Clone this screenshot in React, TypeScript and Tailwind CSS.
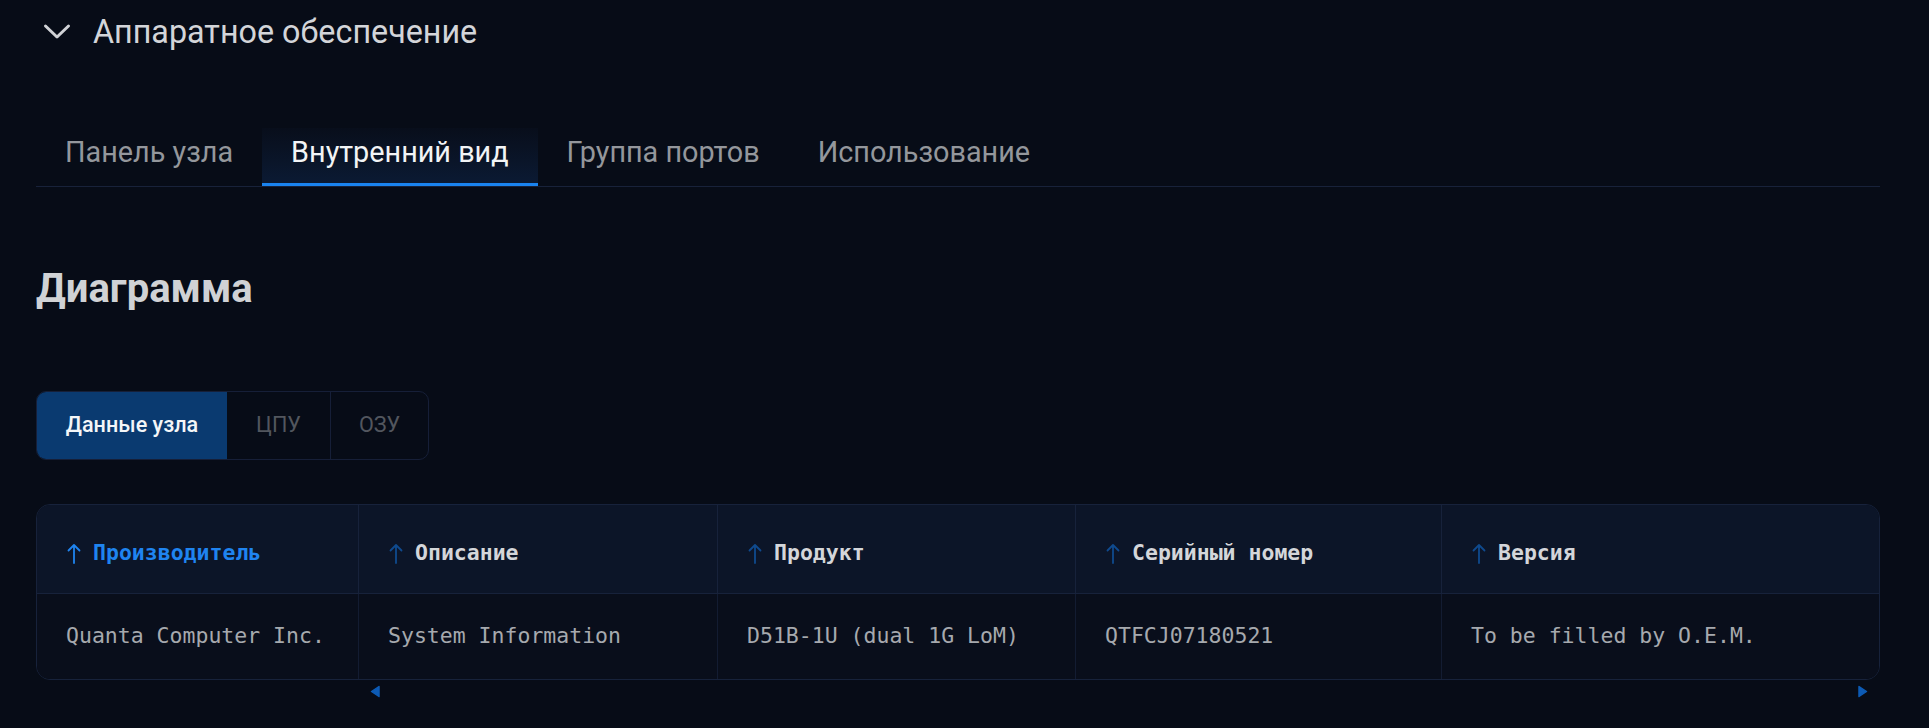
import React from 'react'

type Column = {
  key: string
  label: string
  value: string
  width: string
}

const tabs = ['Панель узла', 'Внутренний вид', 'Группа портов', 'Использование']

const columns: Column[] = [
  { key: 'vendor', label: 'Производитель', value: 'Quanta Computer Inc.', width: 'w-[322px]' },
  { key: 'desc', label: 'Описание', value: 'System Information', width: 'w-[359px]' },
  { key: 'product', label: 'Продукт', value: 'D51B-1U (dual 1G LoM)', width: 'w-[358px]' },
  { key: 'serial', label: 'Серийный номер', value: 'QTFCJ07180521', width: 'w-[366px]' },
  { key: 'version', label: 'Версия', value: 'To be filled by O.E.M.', width: 'flex-1' },
]

function SortArrow({ active }: { active?: boolean }) {
  return (
    <svg
      width="14"
      height="21"
      viewBox="0 0 14 21"
      fill="none"
      stroke={active ? '#1f84f0' : '#0f4a8e'}
      strokeWidth="1.8"
      strokeLinecap="round"
      strokeLinejoin="round"
      className="shrink-0"
    >
      <path d="M7 20V2M1.5 7.5 7 2l5.5 5.5" />
    </svg>
  )
}

function Triangle({ dir }: { dir: 'left' | 'right' }) {
  return (
    <svg width="10" height="13" viewBox="0 0 10 13" fill="#0d5bb5">
      {dir === 'left' ? (
        <path d="M9 1.5 1.5 6.5 9 11.5Z" strokeLinejoin="round" stroke="#0d5bb5" strokeWidth="1.5" />
      ) : (
        <path d="M1 1.5 8.5 6.5 1 11.5Z" strokeLinejoin="round" stroke="#0d5bb5" strokeWidth="1.5" />
      )}
    </svg>
  )
}

export default function App() {
  return (
    <div className="min-h-screen bg-[#070c17] pl-[36px] pr-[49px] font-['Roboto',sans-serif]">
      <div className="flex h-[64px] items-center">
        <svg width="28" height="18" viewBox="0 0 28 18" fill="none" className="ml-[7px]">
          <path d="M2.5 3 14 14 25.5 3" stroke="#d0d2d6" strokeWidth="3" strokeLinecap="round" strokeLinejoin="round" />
        </svg>
        <span className="ml-[22px] text-[32.3px] leading-none text-[#d3d5d9]">Аппаратное обеспечение</span>
      </div>

      <div className="mt-[64px] flex border-b border-[#18223a]">
        {tabs.map((tab, i) => (
          <div
            key={tab}
            className={
              i === 1
                ? 'flex h-[58px] items-center border-b-[3px] border-[#1a84f0] bg-gradient-to-b from-[#080e1b] to-[#0b1a33] px-[29px] pb-[5px] text-[28.8px] text-[#f2f4f6]'
                : 'flex h-[58px] items-center px-[29px] pb-[8px] text-[28.8px] text-[#94979c]'
            }
          >
            {tab}
          </div>
        ))}
      </div>

      <h2 className="mt-[78px] text-[40px] font-bold leading-[48px] text-[#d0d2d5]">Диаграмма</h2>

      <div className="mt-[78px] flex h-[69px] w-[393px] overflow-hidden rounded-[10px] border border-[#161f38] text-[21.6px]">
        <div className="flex w-[190px] items-center justify-center bg-[#0a3a70] font-medium text-[#f4f6f8]">Данные узла</div>
        <div className="flex w-[104px] items-center justify-center border-r border-[#161f38] text-[#52565e]">ЦПУ</div>
        <div className="flex flex-1 items-center justify-center text-[#52565e]">ОЗУ</div>
      </div>

      <div className="mt-[44px] overflow-hidden rounded-[14px] border border-[#17223b] font-['DejaVu_Sans_Mono',monospace] text-[21.5px]">
        <div className="flex h-[89px] border-b border-[#17223b] bg-[#0c1528]">
          {columns.map((c, i) => (
            <div
              key={c.key}
              className={`${c.width} flex items-center gap-[12px] px-[30px] pt-[8px] font-bold ${i < columns.length - 1 ? 'border-r border-[#17223b]' : ''} ${i === 0 ? 'text-[#1f84f0]' : 'text-[#d4d6da]'}`}
            >
              <SortArrow active={i === 0} />
              <span>{c.label}</span>
            </div>
          ))}
        </div>
        <div className="flex h-[85px] bg-[#090e1b]">
          {columns.map((c, i) => (
            <div
              key={c.key}
              className={`${c.width} flex items-center px-[29px] text-[#a6a9ae] ${i < columns.length - 1 ? 'border-r border-[#131c32]' : ''}`}
            >
              {c.value}
            </div>
          ))}
        </div>
      </div>

      <div className="mt-[5px] flex items-center pl-[334px] pr-[12px]">
        <Triangle dir="left" />
        <div className="flex-1" />
        <Triangle dir="right" />
      </div>
    </div>
  )
}
